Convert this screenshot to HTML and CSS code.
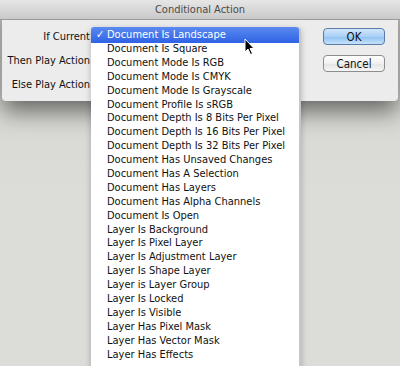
FILE: index.html
```html
<!DOCTYPE html>
<html>
<head>
    <meta charset="UTF-8">
    <title>Conditional Action</title>
    <link rel="stylesheet" href="styles.css">
</head>
<body>
    <div class="dialog">
        <div class="titlebar">Conditional Action</div>
        <div class="content">
            <div class="fields">
                <div class="row"><label class="label">If Current</label><div class="popup"></div></div>
                <div class="row"><label class="label">Then Play Action</label><div class="popup"></div></div>
                <div class="row"><label class="label">Else Play Action</label><div class="popup"></div></div>
            </div>
            <div class="buttons">
                <button class="btn default">OK</button>
                <button class="btn">Cancel</button>
            </div>
        </div>
    </div>

    <ul class="menu">
        <li class="selected"><span class="check">✓</span>Document Is Landscape</li>
        <li>Document Is Square</li>
        <li>Document Mode Is RGB</li>
        <li>Document Mode Is CMYK</li>
        <li>Document Mode Is Grayscale</li>
        <li>Document Profile Is sRGB</li>
        <li>Document Depth Is 8 Bits Per Pixel</li>
        <li>Document Depth Is 16 Bits Per Pixel</li>
        <li>Document Depth Is 32 Bits Per Pixel</li>
        <li>Document Has Unsaved Changes</li>
        <li>Document Has A Selection</li>
        <li>Document Has Layers</li>
        <li>Document Has Alpha Channels</li>
        <li>Document Is Open</li>
        <li>Layer Is Background</li>
        <li>Layer Is Pixel Layer</li>
        <li>Layer Is Adjustment Layer</li>
        <li>Layer Is Shape Layer</li>
        <li>Layer is Layer Group</li>
        <li>Layer Is Locked</li>
        <li>Layer Is Visible</li>
        <li>Layer Has Pixel Mask</li>
        <li>Layer Has Vector Mask</li>
        <li>Layer Has Effects</li>
    </ul>

    <svg class="cursor" width="12" height="18" viewBox="0 0 12 18">
        <path d="M1 1 L1 14 L4 11 L6.5 16.5 L8.5 15.5 L6 10.5 L10 10.5 Z" fill="#000" stroke="#fff" stroke-width="1"/>
    </svg>
</body>
</html>
```

FILE: styles.css
```css
body {
    margin: 0;
    width: 400px;
    height: 366px;
    overflow: hidden;
    position: relative;
    font-family: "DejaVu Sans Condensed", "DejaVu Sans", sans-serif;
    font-stretch: condensed;
    background: linear-gradient(to bottom, #d4d4d0, #dcdcd8 200px);
}
.dialog {
    margin: 0 2px;
    background-color: #ececec;
    border-radius: 0 0 4px 4px;
    box-shadow: 0 10px 24px rgba(0,0,0,0.55);
    height: 101px;
}
.titlebar {
    height: 19px;
    line-height: 19px;
    text-align: center;
    font-size: 11px;
    color: #4a4a4a;
    background: linear-gradient(to bottom, #e6e6e6, #c9c9c9);
    border-bottom: 1px solid #9a9a9a;
    margin: 0 -2px;
}
.content {
    display: flex;
    justify-content: space-between;
    padding: 8px 13px 0 0;
}
.fields {
    display: flex;
    flex-direction: column;
    gap: 7px;
}
.row {
    display: flex;
    align-items: center;
    height: 17px;
}
.label {
    width: 88px;
    text-align: right;
    font-size: 11px;
    color: #111;
    white-space: nowrap;
}
.popup {
    width: 190px;
    height: 16px;
    margin-left: 4px;
}
.buttons {
    display: flex;
    flex-direction: column;
    gap: 10px;
}
.btn {
    width: 62px;
    height: 17px;
    padding: 0;
    font-family: inherit;
    font-size: 11.5px;
    color: #111;
    border: 1px solid #8d8d8d;
    border-radius: 4px;
    background: linear-gradient(to bottom, #ffffff, #f0f0f0 50%, #e4e4e4 51%, #f6f6f6);
}
.btn.default {
    border-color: #5a7aa8;
    background: linear-gradient(to bottom, #d4e6fa, #a8cff5 50%, #8ec0f2 51%, #c6e2fb);
}
.menu {
    position: absolute;
    left: 91px;
    top: 27px;
    width: 208px;
    height: 345px;
    margin: 0;
    padding: 1px 0 0 0;
    list-style: none;
    background: #fff;
    border-right: 2px solid #c6c6c6;
    border-radius: 4px 4px 0 0;
    box-shadow: 0 2px 6px rgba(0,0,0,0.25);
}
.menu li {
    height: 13.9px;
    line-height: 13.9px;
    padding-left: 16px;
    font-size: 11px;
    color: #111;
    white-space: nowrap;
    position: relative;
}
.menu li.selected {
    height: 16px;
    line-height: 16px;
    margin-top: -1px;
    margin-bottom: -1px;
    color: #fff;
    background: linear-gradient(to bottom, #5a8af0, #2f62e6);
    border-radius: 3px 3px 0 0;
}
.check {
    position: absolute;
    left: 5px;
}
.cursor {
    position: absolute;
    left: 244px;
    top: 38px;
}
```
